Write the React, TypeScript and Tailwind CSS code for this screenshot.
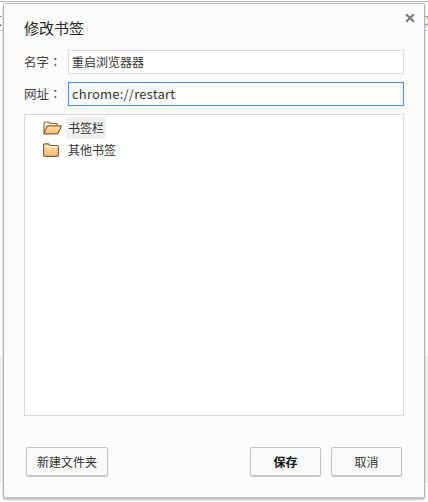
import React from "react";

const font = { fontFamily: '"Noto Sans CJK SC", sans-serif' };

function FolderOpen() {
  return (
    <svg width="19" height="14" viewBox="0 0 19 14" className="shrink-0">
      <defs>
        <linearGradient id="fo" x1="0" y1="0" x2="0" y2="1">
          <stop offset="0" stopColor="#ffe3ad" />
          <stop offset="1" stopColor="#f9bb69" />
        </linearGradient>
      </defs>
      <path d="M1 12.500V2.500Q1 1 2.500 1H6L7.500 2.500H13.500Q14.500 2.500 14.500 3.500V5" fill="#fff3d8" stroke="#85623a" strokeWidth="1.200" />
      <path d="M1 12.800L4 5.500Q4.300 4.800 5 4.800H17.500Q18.500 4.800 18 5.800L15.300 12Q15 12.800 14 12.800H1Z" fill="url(#fo)" stroke="#85623a" strokeWidth="1.200" strokeLinejoin="round" />
    </svg>
  );
}

function FolderClosed() {
  return (
    <svg width="16" height="14" viewBox="0 0 16 14" className="shrink-0">
      <defs>
        <linearGradient id="fc" x1="0" y1="0" x2="0" y2="1">
          <stop offset="0" stopColor="#ffe8ba" />
          <stop offset="1" stopColor="#f9bd6c" />
        </linearGradient>
      </defs>
      <path d="M.6 12V2Q.6 .8 2 .8H5.500L7 2.500H14Q15.400 2.500 15.400 4V12Q15.400 13.300 14 13.300H2Q.6 13.300 .6 12Z" fill="url(#fc)" stroke="#85623a" strokeWidth="1.200" />
      <path d="M1.200 3.600H14.800" stroke="#fff5e0" strokeWidth="1" />
    </svg>
  );
}

function Field({ label, value, focused }: { label: string; value: string; focused?: boolean }) {
  return (
    <div className="flex items-center h-[24px]">
      <span className="w-[44px] shrink-0 text-[12.500px] text-[#444]">
        {label}
        <span className="font-['Noto_Sans_CJK_TC']">：</span>
      </span>
      <div
        className={`flex-1 h-[24px] bg-white border px-[3px] flex items-center text-[#333] ${
          focused ? "border-[#4d90fe] text-[13px] tracking-[0.2px]" : "border-[#d9d9d9] text-[12px]"
        }`}
      >
        {value}
      </div>
    </div>
  );
}

function Btn({ children, className }: { children: React.ReactNode; className: string }) {
  return (
    <button
      className={`h-[29px] rounded-[2px] border border-[#c4c4c4] bg-[#f9f9f9] shadow-[0_1px_1px_rgba(0,0,0,0.2)] text-[12px] ${className}`}
    >
      {children}
    </button>
  );
}

export default function App() {
  return (
    <div className="relative w-[428px] h-[502px] bg-white overflow-hidden" style={font}>
      <div className="absolute left-0 right-0 top-[1px] h-[1px] bg-[#bdbdbd]" />
      <div className="absolute left-0 right-0 top-[30px] h-[1px] bg-[#c8c8c8]" />
      <div className="absolute left-0 right-0 top-[356px] h-[127px] bg-[#f0f0f0]" />
      <span className="absolute left-[-10px] top-[11px] text-[12px] text-[#456]">文</span>
      <span className="absolute left-[424px] top-[11px] text-[12px] text-[#a86]">文</span>

      <div className="absolute left-[3px] top-[3px] w-[422px] h-[495px] rounded-[2px] bg-[#fbfbfb] border border-[#c0c0c0] border-l-[#b0b0b0] border-r-[#b0b0b0] shadow-[0_2px_2px_rgba(0,0,0,0.25)] pt-[13px] pl-[20px] pr-[20px] flex flex-col">
        <button className="absolute right-[9px] top-[9px] w-[10px] h-[10px] text-[#7a7a7a]">
          <svg width="10" height="10" viewBox="0 0 10 10">
            <path d="M1.200 1.200L8.800 8.800M8.800 1.200L1.200 8.800" stroke="currentColor" strokeWidth="2.200" />
          </svg>
        </button>
        <h1 className="h-[22px] leading-[22px] text-[15px] font-normal text-[#222]">修改书签</h1>
        <div className="mt-[11px] flex flex-col gap-[8px]">
          <Field label="名字" value="重启浏览器器" />
          <Field label="网址" value="chrome://restart" focused />
        </div>
        <div className="mt-[8px] h-[302px] bg-white border border-[#d9d9d9] pl-[18px] pt-[2px]">
          <div className="flex items-center h-[22px]">
            <FolderOpen />
            <span className="ml-[4px] px-[2px] h-[22px] leading-[22px] bg-[#f0f0f0] text-[12px] text-[#333]">书签栏</span>
          </div>
          <div className="flex items-center h-[22px]">
            <span className="w-[19px] shrink-0"><FolderClosed /></span>
            <span className="ml-[4px] px-[2px] text-[12px] text-[#333]">其他书签</span>
          </div>
        </div>
        <div className="mt-[31px] flex items-start pl-[2px] pr-[2px]">
          <Btn className="w-[82px] text-[#333]">新建文件夹</Btn>
          <Btn className="ml-auto w-[71px] font-bold text-[#111]">保存</Btn>
          <Btn className="ml-[10px] w-[71px] text-[#333]">取消</Btn>
        </div>
      </div>
    </div>
  );
}
